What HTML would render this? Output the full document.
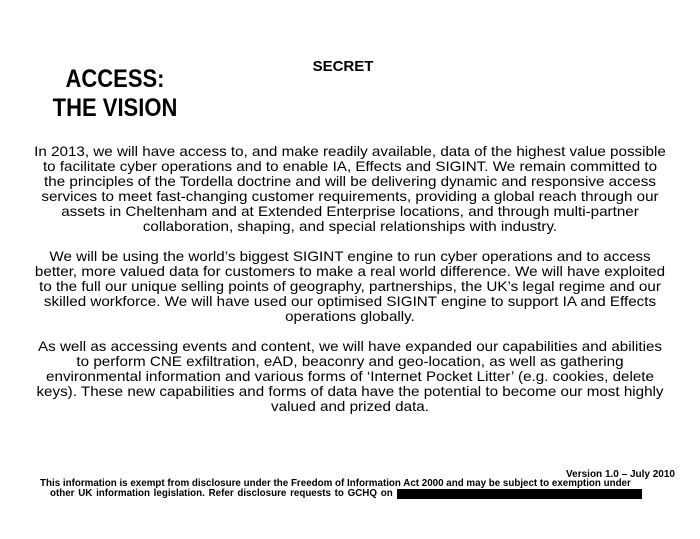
<!DOCTYPE html>
<html><head><meta charset="utf-8"><style>
body{margin:0;width:700px;height:539px;background:#fff;font-family:"Liberation Sans",Arial,sans-serif;color:#000;position:relative;overflow:hidden}
.a{position:absolute;white-space:nowrap}
.t{font-weight:bold;font-size:22px;line-height:26px;left:0;width:230px;text-align:center;transform:scale(1.0,1.12);transform-origin:112px 13px}
.l{left:0;width:700px;text-align:center;font-size:14px;line-height:15px;transform:scaleX(1.085);transform-origin:350px 0}
.f{font-weight:bold;font-size:9.8px;line-height:10px}
</style></head><body>
<div class="a" style="left:293px;width:100px;text-align:center;top:58px;font-weight:bold;font-size:15px;line-height:18px">SECRET</div>
<div class="a t" style="top:66px">ACCESS:</div>
<div class="a t" style="top:94.5px">THE VISION</div>
<div class="a l" style="top:144px">In 2013, we will have access to, and make readily available, data of the highest value possible<br>to facilitate cyber operations and to enable IA, Effects and SIGINT. We remain committed to<br>the principles of the Tordella doctrine and will be delivering dynamic and responsive access<br>services to meet fast-changing customer requirements, providing a global reach through our<br>assets in Cheltenham and at Extended Enterprise locations, and through multi-partner<br>collaboration, shaping, and special relationships with industry.</div>
<div class="a l" style="top:249px">We will be using the world’s biggest SIGINT engine to run cyber operations and to access<br>better, more valued data for customers to make a real world difference. We will have exploited<br>to the full our unique selling points of geography, partnerships, the UK’s legal regime and our<br>skilled workforce. We will have used our optimised SIGINT engine to support IA and Effects<br>operations globally.</div>
<div class="a l" style="top:339px">As well as accessing events and content, we will have expanded our capabilities and abilities<br>to perform CNE exfiltration, eAD, beaconry and geo-location, as well as gathering<br>environmental information and various forms of ‘Internet Pocket Litter’ (e.g. cookies, delete<br>keys). These new capabilities and forms of data have the potential to become our most highly<br>valued and prized data.</div>
<div class="a" style="right:25px;top:469px;font-weight:bold;font-size:10px">Version 1.0 – July 2010</div>
<div class="a f" style="left:40px;top:479px">This information is exempt from disclosure under the Freedom of Information Act 2000 and may be subject to exemption under</div>
<div class="a f" style="left:50px;top:489px;word-spacing:1px">other UK information legislation. Refer disclosure requests to GCHQ on</div>
<div class="a" style="left:397px;top:489px;width:245px;height:10px;background:#000"></div>
</body></html>
